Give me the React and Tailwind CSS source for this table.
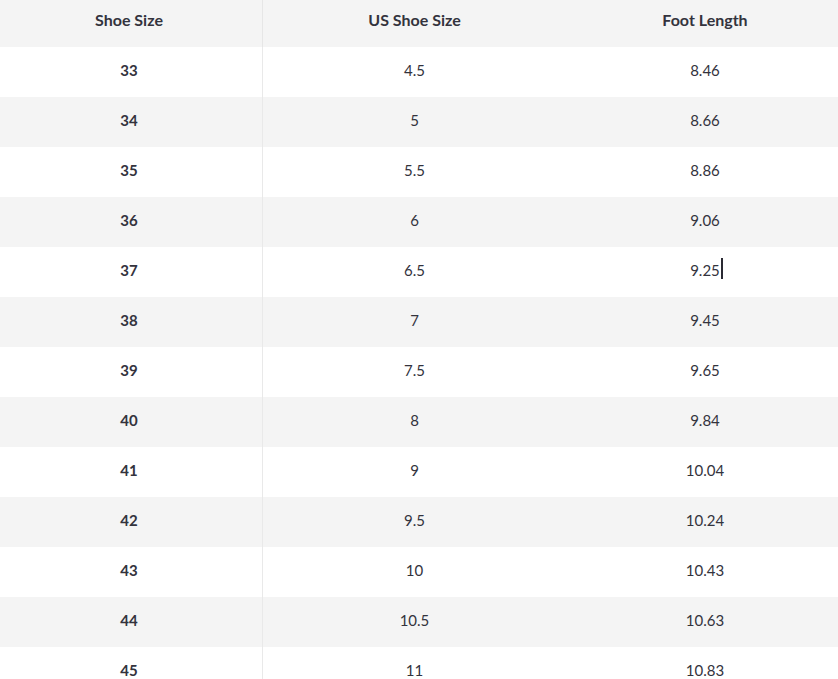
const rows = [
  ["33", "4.5", "8.46"],
  ["34", "5", "8.66"],
  ["35", "5.5", "8.86"],
  ["36", "6", "9.06"],
  ["37", "6.5", "9.25"],
  ["38", "7", "9.45"],
  ["39", "7.5", "9.65"],
  ["40", "8", "9.84"],
  ["41", "9", "10.04"],
  ["42", "9.5", "10.24"],
  ["43", "10", "10.43"],
  ["44", "10.5", "10.63"],
  ["45", "11", "10.83"],
];

export default function App() {
  return (
    <div className="w-[838px] h-[679px] overflow-hidden bg-white text-[#33333d] font-['Lato','Liberation_Sans',sans-serif]">
      <div className="grid grid-cols-[262px_1px_303px_272px] h-[47px] bg-[#f4f4f4] text-[16px] font-bold">
        <div className="flex items-center justify-center pr-1 pb-[8px]">Shoe Size</div>
        <div className="bg-[#e6e6e6]"></div>
        <div className="flex items-center justify-center pb-[8px]">US Shoe Size</div>
        <div className="flex items-center justify-center pl-[6px] pb-[8px]">Foot Length</div>
      </div>
      {rows.map((r, i) => (
        <div
          key={r[0]}
          className={
            "grid grid-cols-[262px_1px_303px_272px] h-[50px] text-[15px] " +
            (i % 2 === 1 ? "bg-[#f4f4f4]" : "bg-white")
          }
        >
          <div className="flex items-center justify-center pr-1 pb-[4px] font-bold">{r[0]}</div>
          <div className="bg-[#e9e9e9]"></div>
          <div className="flex items-center justify-center pb-[4px]">{r[1]}</div>
          <div className="flex items-center justify-center pl-[6px] pb-[4px]">
            <span className="relative">
              {r[2]}
              {r[0] === "37" && (
                <span className="absolute -right-[3px] top-[-1px] w-[2px] h-[21px] bg-[#2a2a33]"></span>
              )}
            </span>
          </div>
        </div>
      ))}
    </div>
  );
}
